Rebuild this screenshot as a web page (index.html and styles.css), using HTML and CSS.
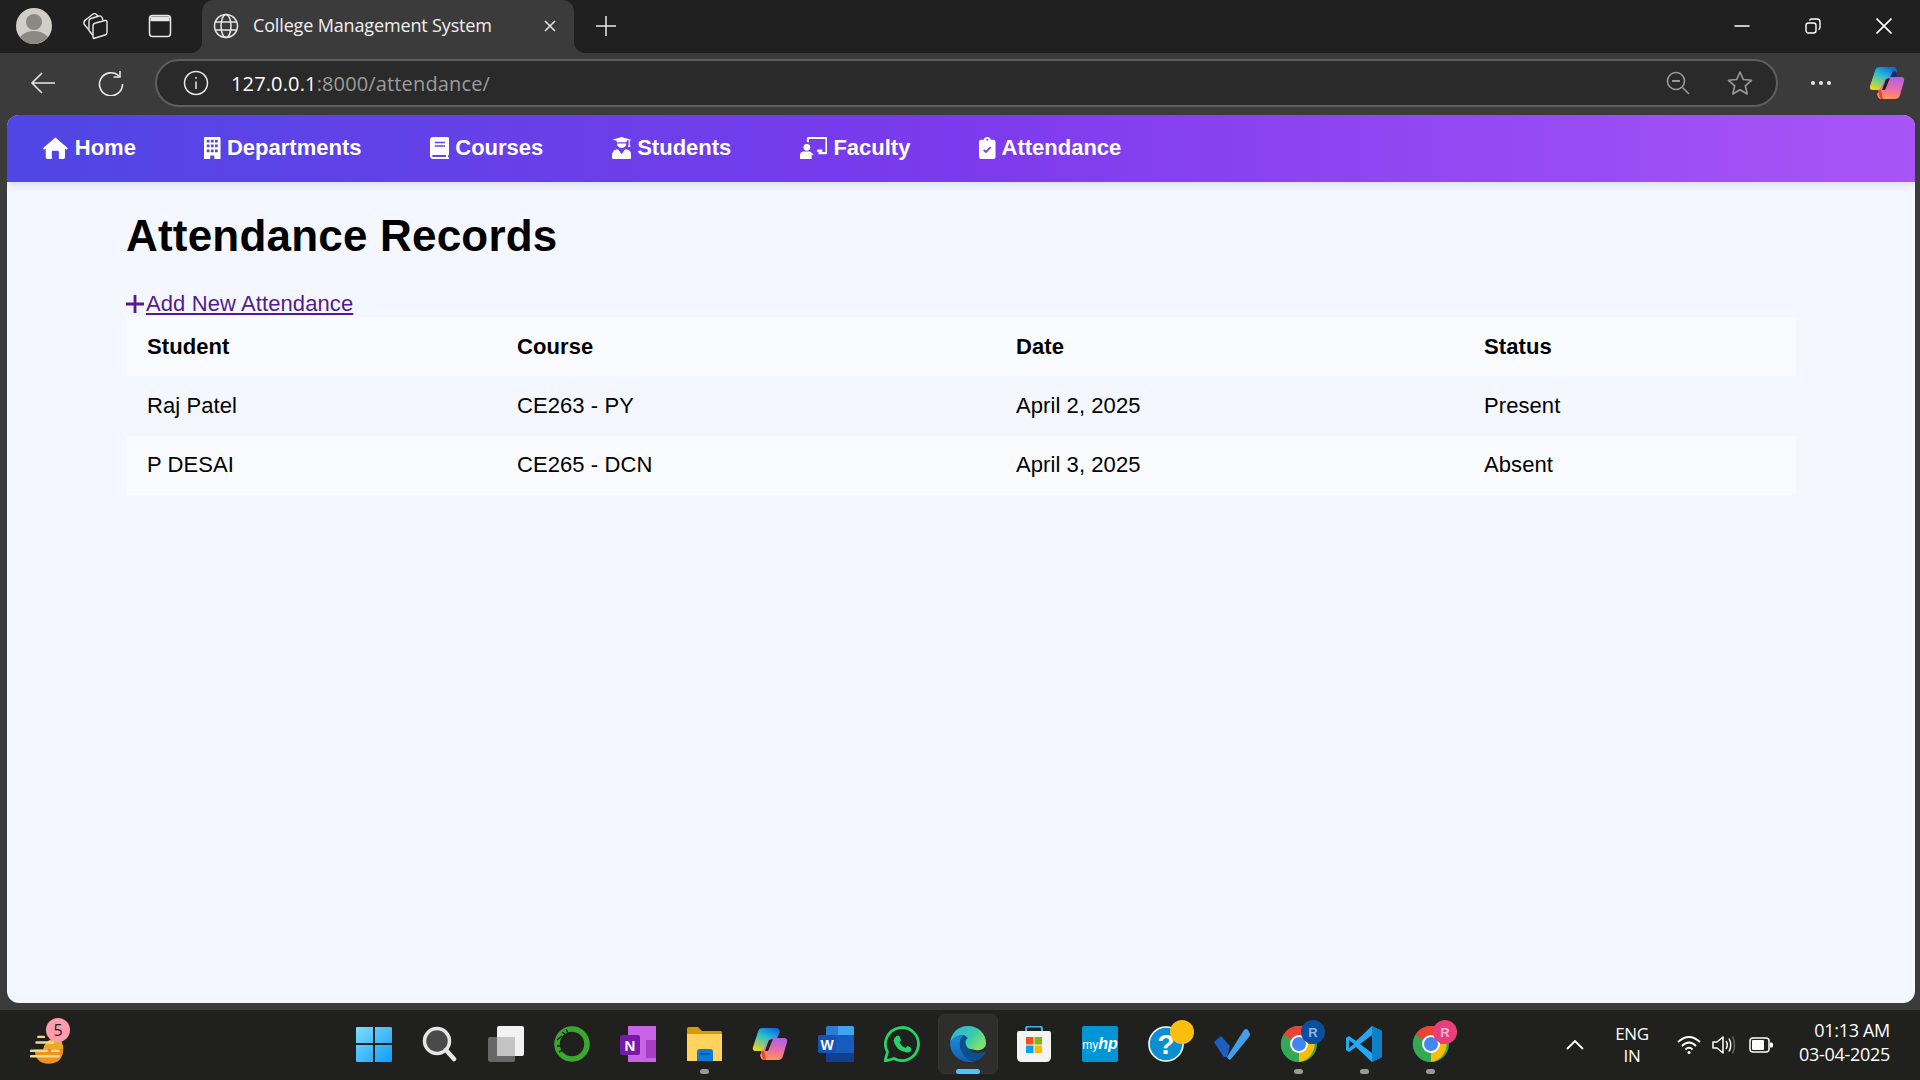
FILE: index.html
```html
<!DOCTYPE html>
<html lang="en">

<head>
    <meta charset="UTF-8">
    <meta name="viewport" content="width=device-width, initial-scale=1.0">
    <title>College Management System</title>
    <link rel="stylesheet" href="styles.css">
</head>

<body>
    <div class="tab-strip">
        <svg class="strip-icon avatar" viewBox="0 0 36 36"><defs><clipPath id="avatar-clip"><circle cx="18" cy="18" r="18"/></clipPath></defs><circle cx="18" cy="18" r="18" fill="#cfcec9"/><g clip-path="url(#avatar-clip)"><circle cx="18" cy="14" r="8" fill="#8a8983"/><ellipse cx="18" cy="33" rx="15" ry="10" fill="#8a8983"/></g></svg>
        <svg class="strip-icon collections" viewBox="0 0 28 28" fill="none" stroke="#e8e8e8" stroke-width="1.4" stroke-linejoin="round"><path d="M12.500 26.500 L24 23 Q26 22.500 26 20.500 V10 Q26 8 24 8.500 L14.500 11 Q12 11.500 12 14 V25 Q12 27 14 26"/><path d="M11.500 23 L8 18.500 V9 Q8 7 10 6.500 L18 4 Q20 3.500 21 5.500 L22 8"/><path d="M7.500 17.500 L3 12 Q2.500 9 4.500 8 L12 2 Q14 1 15.500 2.500 L17 4.500"/></svg>
        <svg class="strip-icon sidebar" viewBox="0 0 24 24" fill="none" stroke="#e8e8e8" stroke-width="1.500"><rect x="1.500" y="1.500" width="21" height="21" rx="3"/><path d="M2.500 2.500 H21.500 V6.500 H2.500Z" fill="#e8e8e8" stroke="none"/><path d="M2.500 6.500 H21.500"/></svg>
        <div class="tab">
            <svg class="tab-globe" viewBox="0 0 26 26" fill="none" stroke="#e8e8e8" stroke-width="1.500"><circle cx="13" cy="13" r="11.500"/><ellipse cx="13" cy="13" rx="5" ry="11.500"/><path d="M2.500 9 H23.500 M2.500 17 H23.500"/></svg>
            <span class="tab-title">College Management System</span>
            <svg class="tab-close" viewBox="0 0 14 14" stroke="#e8e8e8" stroke-width="1.500"><path d="M2 2 L12 12 M12 2 L2 12"/></svg>
        </div>
        <svg class="new-tab" viewBox="0 0 22 22" stroke="#e8e8e8" stroke-width="1.500"><path d="M11 1 V21 M1 11 H21"/></svg>
        <div class="window-buttons">
            <svg viewBox="0 0 16 16" stroke="#fff" stroke-width="1.500"><path d="M0.500 8 H15.500"/></svg>
            <svg viewBox="0 0 16 16" fill="none" stroke="#fff" stroke-width="1.400"><rect x="1" y="5" width="10" height="10" rx="2.500"/><path d="M4.500 2.500 Q5 1 7 1 H12 Q15 1 15 4 V9 Q15 11 13.500 11.500"/></svg>
            <svg viewBox="0 0 16 16" stroke="#fff" stroke-width="1.600"><path d="M0.500 0.500 L15.500 15.500 M15.500 0.500 L0.500 15.500"/></svg>
        </div>
    </div>

    <div class="toolbar">
        <svg class="tool-icon back" viewBox="0 0 26 24" fill="none" stroke="#e8e8e8" stroke-width="1.600"><path d="M25 12 H2 M12 2 L2 12 L12 22"/></svg>
        <svg class="tool-icon reload" viewBox="0 0 26 26" fill="none" stroke="#e8e8e8" stroke-width="1.600"><path d="M21 6 A11.500 11.500 0 1 0 24.500 14"/><path d="M22 1 V7 H15.500"/></svg>
        <div class="address-bar">
            <svg class="info-icon" viewBox="0 0 26 26" fill="none" stroke="#e8e8e8" stroke-width="1.500"><circle cx="13" cy="13" r="11.500"/><path d="M13 11.500 V19 M13 7 V8.800"/></svg>
            <span class="url"><span class="url-host">127.0.0.1</span>:8000/attendance/</span>
            <svg class="zoom-out" viewBox="0 0 24 24" fill="none" stroke="#9a9a9a" stroke-width="1.600"><circle cx="10" cy="10" r="8.500"/><path d="M16.500 16.500 L23 23"/><path d="M6 10 H14" stroke-width="2"/></svg>
            <svg class="star" viewBox="0 0 26 26" fill="none" stroke="#9a9a9a" stroke-width="1.600" stroke-linejoin="round"><path d="M13 2 L16.300 9.500 L24.500 10.300 L18.300 15.800 L20.200 24 L13 19.700 L5.800 24 L7.700 15.800 L1.500 10.300 L9.700 9.500Z"/></svg>
        </div>
        <svg class="dots" viewBox="0 0 22 6" fill="#e8e8e8"><circle cx="3" cy="3" r="2"/><circle cx="11" cy="3" r="2"/><circle cx="19" cy="3" r="2"/></svg>
        <svg class="copilot" viewBox="0 0 36 34">
            <defs>
                <linearGradient id="cop-a" x1="0.700" y1="0" x2="0.200" y2="1"><stop offset="0" stop-color="#0f6fe0"/><stop offset="0.400" stop-color="#2bc0d0"/><stop offset="1" stop-color="#e8d820"/></linearGradient>
                <linearGradient id="cop-b" x1="0.600" y1="0" x2="0.400" y2="1"><stop offset="0" stop-color="#b060e8"/><stop offset="0.600" stop-color="#f070a0"/><stop offset="1" stop-color="#ff9a50"/></linearGradient>
            </defs>
            <path d="M10 1 H24 Q27 1 28 5 L20 21 Q19 24 15 24 H4 Q0 24 1 20 L6 5 Q7 1 10 1Z" fill="url(#cop-a)"/>
            <path d="M26 11 H32 Q36 11 35 15 L31 29 Q30 33 26 33 H12 Q9 33 8 28 L16 14 Q18 11 21 11Z" fill="url(#cop-b)"/>
            <path d="M21 11 L24 5 Q25 3 27 6 L28 11Z" fill="#1a2a70"/>
            <path d="M12 24 L9 24 L11 32 Q12 33 14 33Z" fill="#f04030"/>
            <path d="M16 24 L21 12 L17 13 L13 24Z" fill="#202020"/>
        </svg>
    </div>

    <div class="page">
        <nav class="navbar">
            <a class="nav-link"><svg class="nav-icon" viewBox="0 0 576 512"><path d="M288 10L566 250Q580 270 560 285Q545 295 530 285L512 270V470Q512 512 470 512H370V350Q370 320 340 320H236Q206 320 206 350V512H106Q64 512 64 470V270L46 285Q31 295 16 285Q-4 270 10 250Z"/></svg>Home</a>
            <a class="nav-link"><svg class="nav-icon" viewBox="0 0 384 512"><path fill-rule="evenodd" d="M30 0H354Q384 0 384 30V512H240V430H144V512H0V30Q0 0 30 0ZM64 64V128H128V64ZM160 64V128H224V64ZM256 64V128H320V64ZM64 176V240H128V176ZM160 176V240H224V176ZM256 176V240H320V176ZM64 288V352H128V288ZM160 288V352H224V288ZM256 288V352H320V288Z"/></svg>Departments</a>
            <a class="nav-link"><svg class="nav-icon" viewBox="0 0 448 512"><path fill-rule="evenodd" d="M80 0H400Q448 0 448 48V400Q448 420 420 424V464Q448 470 448 490Q448 512 424 512H80Q0 512 0 432V80Q0 0 80 0ZM112 112V144H352V112ZM112 192V224H352V192ZM80 420Q48 424 48 444Q48 464 80 464H372V420Z"/></svg>Courses</a>
            <a class="nav-link"><svg class="nav-icon" viewBox="0 0 448 512"><path d="M224 0L440 62V84L416 78V170L430 230H374L388 170V71L340 85V100Q340 110 335 120H113Q108 110 108 100V85L8 62ZM118 150H330Q336 250 224 256Q112 250 118 150ZM96 288Q130 282 150 296L224 400L298 296Q318 282 352 288Q448 310 448 440V480Q448 512 416 512H32Q0 512 0 480V440Q0 310 96 288Z"/></svg>Students</a>
            <a class="nav-link"><svg class="nav-icon" viewBox="0 0 640 512"><path d="M160 160a80 80 0 1 1 0 160a80 80 0 0 1 0-160zM90 340H210Q240 340 262 362L320 420H270V512H0V430Q0 340 90 340ZM200 0H600Q640 0 640 40V360Q640 400 600 400H430V350H592V48H208V130Q180 112 160 115V40Q160 0 200 0ZM400 290H520V350H400Z"/></svg>Faculty</a>
            <a class="nav-link"><svg class="nav-icon" viewBox="0 0 384 512"><path fill-rule="evenodd" d="M48 64H112Q125 0 192 0Q259 0 272 64H336Q384 64 384 112V464Q384 512 336 512H48Q0 512 0 464V112Q0 64 48 64ZM192 40a24 24 0 1 0 0 48a24 24 0 0 0 0-48ZM288 250L260 222L160 322L122 284L94 312L160 378Z"/></svg>Attendance</a>
        </nav>

        <main class="content">
            <h1>Attendance Records</h1>
            <a class="add-link" href="#"><svg class="plus" viewBox="0 0 18 18" stroke="#551a8b" stroke-width="2.800"><path d="M9 0 V18 M0 9 H18"/></svg><span>Add New Attendance</span></a>
            <table class="records">
                <colgroup>
                    <col class="col-student">
                    <col class="col-course">
                    <col class="col-date">
                    <col class="col-status">
                </colgroup>
                <thead>
                    <tr>
                        <th>Student</th>
                        <th>Course</th>
                        <th>Date</th>
                        <th>Status</th>
                    </tr>
                </thead>
                <tbody>
                    <tr>
                        <td>Raj Patel</td>
                        <td>CE263 - PY</td>
                        <td>April 2, 2025</td>
                        <td>Present</td>
                    </tr>
                    <tr>
                        <td>P DESAI</td>
                        <td>CE265 - DCN</td>
                        <td>April 3, 2025</td>
                        <td>Absent</td>
                    </tr>
                </tbody>
            </table>
        </main>
    </div>

    <div class="taskbar">
        <div class="weather">
            <svg class="weather-icon" viewBox="0 0 40 36">
                <path d="M5 20 H36 Q35 35 20 35 Q6 35 5 20Z" fill="#f0921c"/>
                <path d="M14 20 Q16 8 30 6 Q36 10 36 20Z" fill="#e9a92a"/>
                <path d="M9 6 H15 M7 12 H25 M1 21 H18 M24 21 H31 M1 27 H31" stroke="#f2d98a" stroke-width="2.600" stroke-linecap="round"/>
            </svg>
            <span class="weather-badge">5</span>
        </div>
        <div class="apps">
            <div class="app">
                <svg class="app-icon" viewBox="0 0 36 36"><defs><linearGradient id="win" x1="0" y1="0" x2="1" y2="1"><stop offset="0" stop-color="#7fdcff"/><stop offset="1" stop-color="#0f9cf5"/></linearGradient></defs><path d="M1 1 H17 V17 H0 V2Q0 1 1 1ZM19 1 H35 Q36 1 36 2 V17 H19ZM0 19 H17 V36 H1 Q0 36 0 35ZM19 19 H36 V35 Q36 36 35 36 H19Z" fill="url(#win)"/></svg>
            </div>
            <div class="app">
                <svg class="app-icon" viewBox="0 0 36 36" fill="#4a4a4a" stroke="#e6e6e6"><circle cx="15" cy="15" r="12.500" stroke-width="3.500"/><path d="M24 24 L32 33" stroke-width="4.500" stroke-linecap="round"/></svg>
            </div>
            <div class="app">
                <svg class="app-icon" viewBox="0 0 36 36"><rect x="9" y="0" width="27" height="30" rx="2" fill="#f2f2f2"/><rect x="0" y="11" width="27" height="25" rx="2" fill="#6f6f6f" opacity="0.900"/><rect x="9" y="11" width="18" height="19" fill="#c4c4c4"/></svg>
            </div>
            <div class="app">
                <svg class="app-icon" viewBox="0 0 36 36" fill="none"><circle cx="18" cy="18" r="15" stroke="#3aa82e" stroke-width="5.500"/><path d="M3 14 L8 10 M3 20 L7 20 M5 26 L9 24 M8 6 L12 9 M12 3 L14 7" stroke="#1f1f1d" stroke-width="1.500"/></svg>
            </div>
            <div class="app">
                <svg class="app-icon" viewBox="0 0 36 36"><path d="M8 0 H36 V36 H8Z" fill="#c964e6"/><path d="M26 14 H36 V32 H26Z" fill="#a53ec0"/><rect x="0" y="9" width="20" height="20" rx="2" fill="#7719aa"/><text class="svg-letter" x="10" y="25" font-size="15" text-anchor="middle">N</text></svg>
            </div>
            <div class="app">
                <svg class="app-icon" viewBox="0 0 36 36"><path d="M1 3 Q1 1 3 1 H12 L16 5 H35 Q36 5 36 7 V34 Q36 35 35 35 H1Z" fill="#d39a08"/><path d="M1 8 H36 V34 Q36 35 35 35 H2 Q1 35 1 34Z" fill="#ffd35c"/><path d="M11 35 V26 Q11 23 14 23 H24 Q27 23 27 26 V35Z" fill="#0f7ad6"/><path d="M14 28 H24" stroke="#0a4f96" stroke-width="1.500"/></svg>
                <span class="app-dot"></span>
            </div>
            <div class="app">
                <svg class="app-icon" viewBox="0 0 36 34"><path d="M10 1 H24 Q27 1 28 5 L20 21 Q19 24 15 24 H4 Q0 24 1 20 L6 5 Q7 1 10 1Z" fill="url(#cop-a)"/><path d="M26 11 H32 Q36 11 35 15 L31 29 Q30 33 26 33 H12 Q9 33 8 28 L16 14 Q18 11 21 11Z" fill="url(#cop-b)"/><path d="M12 24 L9 24 L11 32 Q12 33 14 33Z" fill="#f04030"/><path d="M16 24 L21 12 L17 13 L13 24Z" fill="#202020"/></svg>
            </div>
            <div class="app">
                <svg class="app-icon" viewBox="0 0 36 36"><rect x="8" y="0" width="28" height="36" rx="2" fill="#2b7cd3"/><path d="M8 9 H36 V18 H8Z" fill="#185abd"/><path d="M8 18 H36 V27 H8Z" fill="#1a5bc0"/><path d="M8 27 H36 V34 Q36 36 34 36 H10 Q8 36 8 34Z" fill="#103f91"/><path d="M20 0 H34 Q36 0 36 2 V9 H20Z" fill="#41a5ee"/><rect x="0" y="9" width="18" height="18" rx="2" fill="#1753b6"/><text class="svg-letter" x="9" y="24" font-size="14" text-anchor="middle">W</text></svg>
            </div>
            <div class="app">
                <svg class="app-icon" viewBox="0 0 36 36"><path d="M1 35 L3.500 26 A16.500 16.500 0 1 1 10 32.500Z" fill="none" stroke="#25d366" stroke-width="2.800" stroke-linejoin="round"/><path d="M12.500 10 Q14.500 9 15.500 10.500 L17 14 Q16.500 15.500 15.500 16.500 Q17.500 20.500 21.500 22 L23.500 20 Q27 21 27.500 23 Q27 26.500 23 26.500 Q12 25 9.500 14.500 Q10 11.500 12.500 10Z" fill="#25d366"/></svg>
            </div>
            <div class="app app-active">
                <svg class="app-icon" viewBox="0 0 36 36"><defs><linearGradient id="edge-a" x1="0" y1="0" x2="1" y2="0.600"><stop offset="0" stop-color="#2cb5e0"/><stop offset="0.600" stop-color="#38c9b0"/><stop offset="1" stop-color="#7fe36b"/></linearGradient><linearGradient id="edge-b" x1="0" y1="0" x2="0" y2="1"><stop offset="0" stop-color="#1b8bdc"/><stop offset="1" stop-color="#0f5fb0"/></linearGradient></defs><path d="M18 0 C29 0 36 8 36 17 C36 23 30 25 25 24 L16 22 C10 20 9 12 14 9 C8 9 2 12 0 17 C1 7 8 0 18 0Z" fill="url(#edge-a)"/><path d="M0 17 C2 12 8 9 14 9 C9 12 8 22 14 29 C17 33 21 35 25 36 C12 38 0 30 0 17Z" fill="url(#edge-b)"/><path d="M14 9 C9 12 8 22 14 29 C18 34 25 37 30 33 C33 31 35 28 36 25 C32 27 25 28 20 24 C15 20 14 14 18 12Z" fill="#0c4f8f"/></svg>
                <span class="app-dot app-dot-active"></span>
            </div>
            <div class="app">
                <svg class="app-icon" viewBox="0 0 36 36"><path d="M10 9 V3 Q10 0.500 12 0.500 H24 Q26 0.500 26 3 V9" fill="none" stroke="#3fb4f0" stroke-width="2"/><path d="M3 5 H33 Q35 5 35 7 V31 Q35 36 30 36 H6 Q1 36 1 31 V7 Q1 5 3 5Z" fill="#f4f4f4"/><rect x="10" y="11" width="7.500" height="7.500" fill="#f25022"/><rect x="18.500" y="11" width="7.500" height="7.500" fill="#7fba00"/><rect x="10" y="19.500" width="7.500" height="7.500" fill="#00a4ef"/><rect x="18.500" y="19.500" width="7.500" height="7.500" fill="#ffb900"/></svg>
            </div>
            <div class="app">
                <svg class="app-icon" viewBox="0 0 36 36"><rect x="0" y="0" width="36" height="36" rx="2" fill="#0096d6"/><text class="svg-hp" x="18" y="23" font-size="12" text-anchor="middle">my<tspan font-weight="700" font-style="italic" font-size="16">hp</tspan></text></svg>
            </div>
            <div class="app">
                <svg class="app-icon app-icon-wide" viewBox="0 0 46 42"><circle cx="18" cy="24" r="17" fill="#0b8fd3" stroke="#fff" stroke-width="1.600"/><text class="svg-letter" x="18" y="34" font-size="28" text-anchor="middle">?</text><circle cx="34" cy="12" r="12" fill="#fdbf0f"/></svg>
            </div>
            <div class="app">
                <svg class="app-icon" viewBox="0 0 36 36"><path d="M0 16 L7 10 L16 20 L13 31 Q11 32 9 30Z" fill="#1d5fc0"/><path d="M13 31 L30 4 Q32 2 34 4 L36 8 Q36 10 35 11 L17 33 Q15 35 13 31Z" fill="#459ee8"/></svg>
            </div>
            <div class="app">
                <svg class="app-icon app-icon-wide" viewBox="0 0 46 42"><use href="#chrome-ball"/><circle cx="33" cy="12" r="12" fill="#0b4f9e"/><text class="svg-r" x="33" y="17" font-size="13" text-anchor="middle" fill="#8fb8e8">R</text></svg>
                <span class="app-dot"></span>
            </div>
            <div class="app">
                <svg class="app-icon" viewBox="0 0 36 36"><path d="M26 0 L36 5 V31 L26 36 L10 21 L3 26 L0 24 V12 L3 10 L10 15Z" fill="#23a9f2"/><path d="M26 0 L36 5 V31 L26 36Z" fill="#0e80ca"/><path d="M26 9 V27 L14 18Z" fill="#1f1f1d"/><path d="M3 14 L8 18 L3 22Z" fill="#1f1f1d"/></svg>
                <span class="app-dot"></span>
            </div>
            <div class="app">
                <svg class="app-icon app-icon-wide" viewBox="0 0 46 42"><use href="#chrome-ball"/><circle cx="33" cy="12" r="12" fill="#ea3e7c"/><text class="svg-r" x="33" y="17" font-size="13" text-anchor="middle" fill="#f5b8cf">R</text></svg>
                <span class="app-dot"></span>
            </div>
        </div>
        <div class="tray">
            <svg class="tray-chevron" viewBox="0 0 18 10" fill="none" stroke="#fff" stroke-width="1.800"><path d="M1 9 L9 1 L17 9"/></svg>
            <div class="tray-lang"><span>ENG</span><span>IN</span></div>
            <svg class="tray-wifi" viewBox="0 0 24 20" fill="none" stroke="#fff" stroke-width="1.800"><path d="M1 7 Q12 -3 23 7 M5 11 Q12 4 19 11 M8.500 14.500 Q12 11 15.500 14.500"/><circle cx="12" cy="17.500" r="1.500" fill="#fff" stroke="none"/></svg>
            <svg class="tray-sound" viewBox="0 0 24 20" fill="none" stroke="#fff" stroke-width="1.500" stroke-linejoin="round"><path d="M1 7 H5 L11 2 V18 L5 13 H1Z"/><path d="M14 6 Q16.500 10 14 14 M17 3.500 Q20.500 10 17 16.500"/><path d="M20.500 1.500 Q24.500 10 20.500 18.500" stroke="#666"/></svg>
            <svg class="tray-battery" viewBox="0 0 24 16"><rect x="1" y="1" width="19" height="14" rx="3" fill="none" stroke="#fff" stroke-width="1.500"/><rect x="3" y="3" width="12" height="10" rx="1" fill="#fff"/><path d="M21 5.500 H22.500 Q24 5.500 24 7 V9 Q24 10.500 22.500 10.500 H21Z" fill="#fff"/></svg>
            <div class="tray-clock"><span>01:13 AM</span><span>03-04-2025</span></div>
        </div>
    </div>

    <svg class="svg-defs" width="0" height="0">
        <defs>
            <g id="chrome-ball">
                <circle cx="19" cy="24" r="18" fill="#34a853"/>
                <path d="M19 24 L3.400 15 A18 18 0 0 1 34.600 15 H19Z" fill="#ea4335"/>
                <path d="M3.400 15 A18 18 0 0 0 19 42 L19 24Z" fill="#34a853"/>
                <path d="M19 24 H34.600 A18 18 0 0 1 19 42Z" fill="#fbbc04"/>
                <circle cx="19" cy="24" r="9" fill="#fff"/>
                <circle cx="19" cy="24" r="7" fill="#4285f4"/>
            </g>
        </defs>
    </svg>
</body>

</html>
```
FILE: styles.css
```css
* {
    box-sizing: border-box;
}

html,
body {
    margin: 0;
    height: 100%;
}

body {
    width: 1920px;
    height: 1080px;
    overflow: hidden;
    display: flex;
    flex-direction: column;
    background: #3b3b3b;
    font-family: "Liberation Sans", Arial, sans-serif;
}

svg {
    display: block;
    flex: none;
}

.svg-defs {
    position: absolute;
}

/* browser title row */
.tab-strip {
    height: 53px;
    display: flex;
    align-items: center;
    background: #202020;
    padding-left: 16px;
    padding-bottom: 2px;
}

.avatar {
    width: 36px;
    height: 36px;
}

.collections {
    width: 28px;
    height: 28px;
    margin-left: 29px;
}

.sidebar {
    width: 24px;
    height: 24px;
    margin-left: 39px;
}

.tab {
    position: relative;
    width: 372px;
    height: 53px;
    margin: 2px 0 0 30px;
    padding: 0 17px 2px 11px;
    display: flex;
    align-items: center;
    background: #3b3b3b;
    border-radius: 12px 12px 0 0;
}

.tab::before,
.tab::after {
    content: "";
    position: absolute;
    bottom: 0;
    width: 12px;
    height: 12px;
}

.tab::before {
    left: -12px;
    background: radial-gradient(circle at 0 0, #202020 12px, #3b3b3b 12.5px);
}

.tab::after {
    right: -12px;
    background: radial-gradient(circle at 100% 0, #202020 12px, #3b3b3b 12.5px);
}

.tab-globe {
    width: 26px;
    height: 26px;
}

.tab-title {
    margin-left: 14px;
    flex: 1;
    color: #f0f0f0;
    font-family: "Open Sans", sans-serif;
    font-size: 18px;
    line-height: 22px;
    padding-bottom: 2px;
    letter-spacing: -0.15px;
    white-space: nowrap;
}

.tab-close {
    width: 14px;
    height: 14px;
}

.new-tab {
    width: 22px;
    height: 22px;
    margin-left: 21px;
}

.window-buttons {
    margin-left: auto;
    margin-right: 28px;
    display: flex;
    gap: 55px;
}

.window-buttons svg {
    width: 16px;
    height: 16px;
}

/* browser address row */
.toolbar {
    height: 62px;
    display: flex;
    align-items: center;
    padding-left: 30px;
    padding-bottom: 2px;
    background: #3b3b3b;
}

.back {
    width: 26px;
    height: 24px;
}

.reload {
    width: 26px;
    height: 26px;
    margin-left: 42px;
}

.address-bar {
    width: 1623px;
    height: 48px;
    margin-left: 31px;
    padding: 0 23px 0 26px;
    display: flex;
    align-items: center;
    background: #2a2a2a;
    border: 2px solid #5e5e5e;
    border-radius: 24px;
}

.info-icon {
    width: 26px;
    height: 26px;
}

.url {
    margin-left: 22px;
    flex: 1;
    color: #9c9c9c;
    font-family: "Open Sans", sans-serif;
    font-size: 20px;
    letter-spacing: 0.14px;
}

.url-host {
    color: #fff;
}

.zoom-out {
    width: 24px;
    height: 24px;
}

.star {
    width: 26px;
    height: 26px;
    margin-left: 37px;
}

.dots {
    width: 22px;
    height: 6px;
    margin-left: 32px;
}

.copilot {
    width: 36px;
    height: 34px;
    margin-left: 37px;
}

/* the app itself */
.page {
    height: 888px;
    margin: 0 5px 0 7px;
    background: #f4f7ff;
    border-radius: 12px;
    overflow: hidden;
}

.navbar {
    height: 67px;
    padding: 0 0 2px 36px;
    display: flex;
    align-items: center;
    gap: 68.6px;
    background: linear-gradient(90deg, #4f46e5, #7c3aed 50%, #a855f7);
    box-shadow: 0 3px 8px rgba(30, 40, 110, 0.12);
}

.nav-link {
    display: flex;
    align-items: center;
    gap: 6px;
    color: #fff;
    font-size: 22px;
    font-weight: 700;
}

.nav-link:first-child {
    gap: 7px;
}

.nav-icon {
    height: 22px;
    width: auto;
    fill: #fff;
}

.content {
    padding: 29px 120px 0 119px;
}

h1 {
    margin: 0 0 29px;
    color: #000;
    font-size: 44px;
    line-height: 50px;
    font-weight: 700;
    letter-spacing: 0.2px;
}

.add-link {
    height: 27px;
    display: flex;
    align-items: center;
    gap: 2px;
    color: #551a8b;
    font-size: 22px;
    letter-spacing: 0.1px;
}

.plus {
    width: 18px;
    height: 18px;
}

.records {
    width: 1670px;
    table-layout: fixed;
    border-collapse: collapse;
    font-size: 22px;
    letter-spacing: 0.08px;
    color: #000;
}

.col-student {
    width: 370px;
}

.col-course {
    width: 499px;
}

.col-date {
    width: 468px;
}

.records th,
.records td {
    height: 59.4px;
    padding: 0 21px;
    text-align: left;
}

.records th {
    font-weight: 700;
}

.records thead tr,
.records tbody tr:nth-child(even) {
    background: #fafbfe;
}

/* windows taskbar */
.taskbar {
    height: 70px;
    margin-top: 7px;
    display: flex;
    align-items: center;
    background: #20201e;
    color: #fff;
}

.weather {
    position: relative;
    width: 341px;
    height: 70px;
    padding: 20px 0 0 30px;
}

.weather-icon {
    width: 37px;
    height: 36px;
}

.weather-badge {
    position: absolute;
    left: 46px;
    top: 8px;
    width: 24px;
    height: 24px;
    border-radius: 50%;
    background: #ff9cae;
    color: #222;
    font-family: "Open Sans", sans-serif;
    font-size: 16px;
    line-height: 24px;
    text-align: center;
}

.apps {
    display: flex;
}

.app {
    position: relative;
    width: 66px;
    height: 70px;
    padding-bottom: 2px;
    display: flex;
    align-items: center;
    justify-content: center;
}

.app-icon {
    width: 36px;
    height: 36px;
}

.app-icon-wide {
    width: 46px;
    height: 42px;
    margin: -6px -10px 0 0;
}

.app-active::before {
    content: "";
    position: absolute;
    left: 3px;
    right: 3px;
    top: 4px;
    bottom: 6px;
    background: #2e2e2c;
    border: 1px solid #353533;
    border-radius: 6px;
}

.app-active svg {
    position: relative;
}

.app-dot {
    position: absolute;
    left: 29px;
    bottom: 6px;
    width: 9px;
    height: 5px;
    border-radius: 3px;
    background: #9a9a9a;
}

.app-dot-active {
    left: 21px;
    width: 24px;
    background: #4cc2ff;
}

.svg-letter {
    fill: #fff;
    font-family: "Liberation Sans", sans-serif;
    font-weight: 700;
}

.svg-hp {
    fill: #fff;
    font-family: "Liberation Sans", sans-serif;
}

.svg-r {
    font-family: "Liberation Sans", sans-serif;
    font-weight: 700;
}

.tray {
    margin-left: auto;
    padding-right: 30px;
    display: flex;
    align-items: center;
}

.tray-chevron {
    width: 18px;
    height: 10px;
}

.tray-lang {
    width: 50px;
    margin-left: 23px;
    display: flex;
    flex-direction: column;
    align-items: center;
    font-family: "Open Sans", sans-serif;
    font-size: 17px;
    line-height: 22px;
    letter-spacing: -0.3px;
}

.tray-wifi {
    width: 24px;
    height: 20px;
    margin-left: 20px;
}

.tray-sound {
    width: 24px;
    height: 20px;
    margin-left: 11px;
}

.tray-battery {
    width: 24px;
    height: 16px;
    margin-left: 13px;
}

.tray-clock {
    width: 117px;
    padding-bottom: 5px;
    display: flex;
    flex-direction: column;
    align-items: flex-end;
    gap: 1px;
    font-family: "Open Sans", sans-serif;
    font-size: 18px;
    line-height: 23px;
    letter-spacing: -0.3px;
}
```
